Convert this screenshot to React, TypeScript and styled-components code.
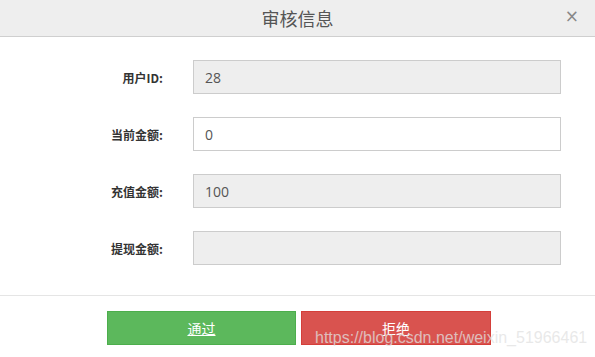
import React from "react";
import styled, { createGlobalStyle } from "styled-components";

const Global = createGlobalStyle`
  html, body { margin: 0; padding: 0; background: #fff; }
  body { font-family: "Open Sans", "Noto Sans CJK SC", sans-serif; }
  * { box-sizing: border-box; }
`;

const Dialog = styled.div`
  position: relative;
  width: 595px;
  height: 357px;
  overflow: hidden;
  background: #fff;
`;

const Header = styled.div`
  position: relative;
  height: 37px;
  background: #eeeeee;
  border-bottom: 1px solid #cfcfcf;
  display: flex;
  align-items: center;
  justify-content: center;
`;

const Title = styled.h4`
  margin: 0;
  font-family: "Noto Sans CJK SC", sans-serif;
  font-size: 18px;
  font-weight: 400;
  color: #555;
  line-height: 36px;
`;

const Close = styled.span`
  position: absolute;
  right: 16px;
  top: 6px;
  font-family: "DejaVu Sans", sans-serif;
  font-size: 17px;
  color: #888;
  line-height: 20px;
`;

const Body = styled.div`
  padding: 23px 0 30px;
  display: flex;
  flex-direction: column;
  gap: 23px;
`;

const Row = styled.div`
  display: grid;
  grid-template-columns: 163px 368px;
  column-gap: 30px;
  align-items: center;
`;

const Label = styled.label`
  text-align: right;
  font-family: "Noto Sans CJK SC", sans-serif;
  font-size: 12px;
  font-weight: 700;
  color: #333;
`;

const Field = styled.div<{ $disabled?: boolean }>`
  height: 34px;
  border: 1px solid #cccccc;
  background: ${(p) => (p.$disabled ? "#eeeeee" : "#ffffff")};
  padding: 0 11px;
  display: flex;
  align-items: center;
  font-family: "Open Sans", "Noto Sans CJK SC", sans-serif;
  font-size: 14px;
  color: #555;
`;

const Footer = styled.div`
  border-top: 1px solid #e5e5e5;
  padding: 15px 0 0 107px;
  display: flex;
  gap: 5px;
`;

const Button = styled.a<{ $variant: "ok" | "no"; $w: number }>`
  width: ${(p) => p.$w}px;
  height: 34px;
  display: flex;
  align-items: center;
  justify-content: center;
  font-family: "Noto Sans CJK SC", sans-serif;
  font-size: 14px;
  color: #fff;
  text-decoration: ${(p) => (p.$variant === "ok" ? "underline" : "none")};
  background: ${(p) => (p.$variant === "ok" ? "#5cb85c" : "#d9534f")};
  border: 1px solid ${(p) => (p.$variant === "ok" ? "#4cae4c" : "#d43f3a")};
`;

const Watermark = styled.div`
  position: absolute;
  left: 315px;
  top: 329px;
  font-family: "Liberation Sans", Arial, sans-serif;
  font-size: 16px;
  color: rgba(225, 225, 225, 0.75);
  white-space: nowrap;
  pointer-events: none;
`;

const rows: { label: string; value: string; disabled: boolean }[] = [
  { label: "用户ID:", value: "28", disabled: true },
  { label: "当前金额:", value: "0", disabled: false },
  { label: "充值金额:", value: "100", disabled: true },
  { label: "提现金额:", value: "", disabled: true },
];

export default function App() {
  return (
    <>
      <Global />
      <Dialog>
        <Header>
          <Title>审核信息</Title>
          <Close>×</Close>
        </Header>
        <Body>
          {rows.map((r) => (
            <Row key={r.label}>
              <Label>{r.label}</Label>
              <Field $disabled={r.disabled}>{r.value}</Field>
            </Row>
          ))}
        </Body>
        <Footer>
          <Button $variant="ok" $w={189}>通过</Button>
          <Button $variant="no" $w={190}>拒绝</Button>
        </Footer>
        <Watermark>https://blog.csdn.net/weixin_51966461</Watermark>
      </Dialog>
    </>
  );
}
